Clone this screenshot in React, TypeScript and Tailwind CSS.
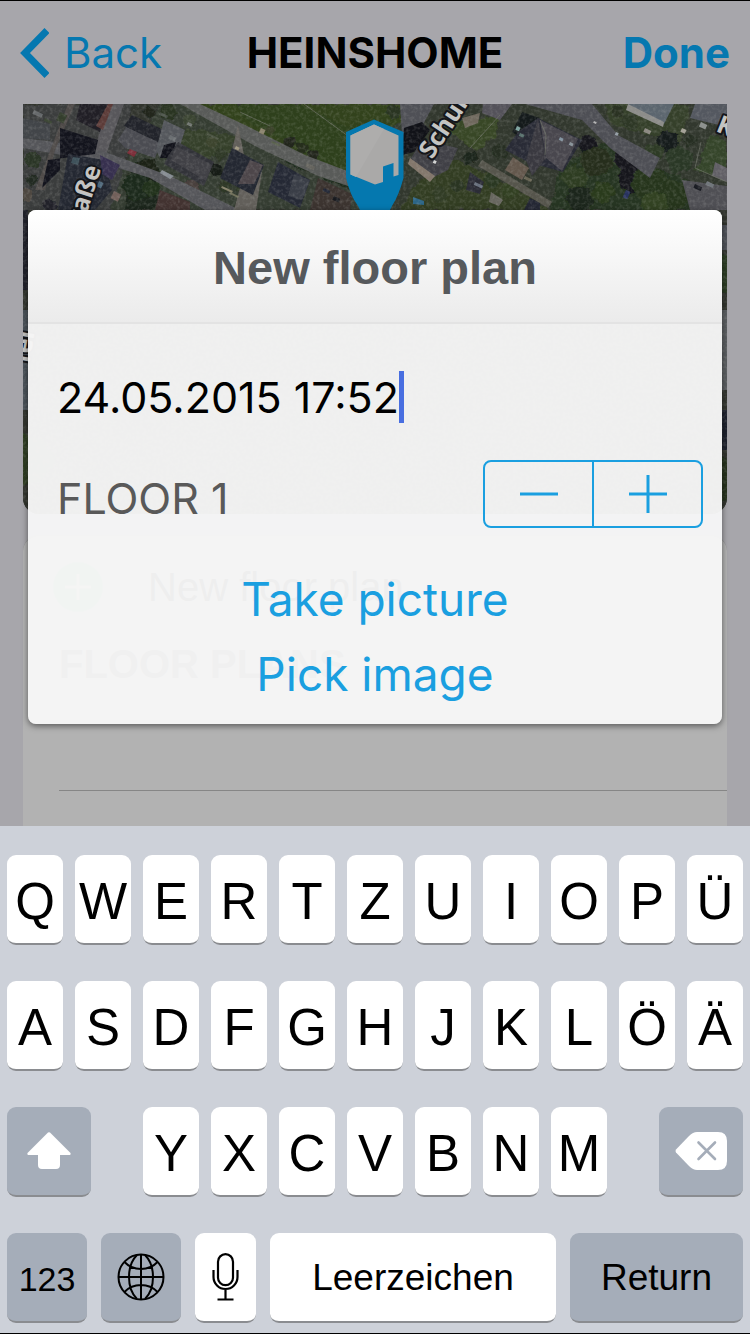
import { useState, type ReactNode } from "react";

type Shape = { d: string; fill: string };

const ground: Shape[] = [
  { d: "M23 104H130L120 210H23Z", fill: "#3b3c3e" },
  { d: "M160 104H330L420 104V210H110L130 150Z", fill: "#363c33" },
  { d: "M180 104L410 104L402 122L348 150L346 178L300 158L240 130Z", fill: "#33431f" },
  { d: "M235 104H300L365 135L345 178L315 158L243 118Z", fill: "#2f401f" },
  { d: "M290 150L345 178L350 190L280 160Z", fill: "#1f2a1a" },
  { d: "M185 128L235 135L232 152L205 160L180 148Z", fill: "#35402c" },
  { d: "M405 104H727V210H395Z", fill: "#30372d" },
  { d: "M430 125L500 115L495 135L478 152L455 135Z", fill: "#394627" },
  { d: "M455 160L500 180L550 210H400L420 180Z", fill: "#323d24" },
  { d: "M560 165L610 140L650 165L690 180L695 210H550Z", fill: "#283620" },
  { d: "M605 104L690 104L680 145L640 132L610 125Z", fill: "#353f2c" },
  { d: "M710 134L727 142V178L696 170Z", fill: "#34452b" },
  { d: "M133 165L158 170L160 200L150 210H125Z", fill: "#1d281b" },
];

const roads: Shape[] = [
  { d: "M108 104H124L104 160L92 158Z", fill: "#58575b" },
  { d: "M23 138L55 142L105 152L170 176L240 210H205L150 178L100 162L23 148Z", fill: "#55565a" },
  { d: "M180 104H200L245 125L305 155L350 172L354 188L318 176L255 146L205 118Z", fill: "#595b59" },
  { d: "M238 125L232 150L236 165L262 172L256 210H234L246 165Z", fill: "#625f5a" },
  { d: "M400 104H434L420 130L402 135Z", fill: "#4f5056" },
  { d: "M525 104H592L618 135L660 158L650 178L610 148L582 120Z", fill: "#4e4f55" },
  { d: "M682 180L727 186V210H690Z", fill: "#4f4f54" },
  { d: "M482 160L552 202L548 208L478 166Z", fill: "#56554c" },
  { d: "M23 118L50 124L50 140L23 138Z", fill: "#424549" },
  { d: "M68 104L75 104L55 150L45 190L35 190Z", fill: "#4f4b49" },
];

const roofs: Shape[] = [
  { d: "M80 104H108L100 132L76 120Z", fill: "#211f26" },
  { d: "M108 104H113L103 130L96 126Z", fill: "#5c3b38" },
  { d: "M60 128L98 140L95 154L48 160L42 188L60 170Z", fill: "#13141d" },
  { d: "M68 154L105 160L112 190L95 210H58Z", fill: "#242832" },
  { d: "M73 157L80 158L78 165L71 163Z", fill: "#3f525b" },
  { d: "M100 155L120 165L112 180L102 174Z", fill: "#37304f" },
  { d: "M118 140L132 118L165 133L155 158L125 148Z", fill: "#4b4c52" },
  { d: "M132 115L166 131L160 143L124 126Z", fill: "#22242b" },
  { d: "M164 120L185 130L180 146L160 158L156 150Z", fill: "#54575c" },
  { d: "M164 145L176 142L172 158L160 158Z", fill: "#12131b" },
  { d: "M168 156L178 142L214 162L204 186L164 164Z", fill: "#323339" },
  { d: "M176 146L212 165L206 181L171 160Z", fill: "#414146" },
  { d: "M232 148L264 165L253 195L220 178Z", fill: "#242832" },
  { d: "M250 160L263 165L254 184L238 184Z", fill: "#4d464a" },
  { d: "M278 162L310 180L300 208L268 192Z", fill: "#252935" },
  { d: "M294 174L310 180L302 200L288 196Z", fill: "#3a3e47" },
  { d: "M318 178L352 194L350 210H310Z", fill: "#3c3430" },
  { d: "M160 190L190 202V210H155Z", fill: "#433331" },
  { d: "M404 128L422 122L430 130L414 152L402 155Z", fill: "#111218" },
  { d: "M422 140L458 148L448 170L428 180L410 160Z", fill: "#404046" },
  { d: "M410 158L435 176L430 182L408 164Z", fill: "#83776c" },
  { d: "M483 104H512L500 120L482 113Z", fill: "#54525a" },
  { d: "M462 118L480 113L478 123L465 128Z", fill: "#6f685d" },
  { d: "M522 112L540 118L524 140L512 132Z", fill: "#141a1b" },
  { d: "M538 118L582 140L563 172L528 162L505 150L518 132Z", fill: "#292b36" },
  { d: "M540 120L578 139L562 171L546 158Z", fill: "#49474e" },
  { d: "M538 118L546 158L532 176L526 160Z", fill: "#3a3940" },
  { d: "M513 157L529 168L522 180L505 170Z", fill: "#64584d" },
  { d: "M628 104H674L664 124L630 110Z", fill: "#5c666f" },
  { d: "M628 104L664 122L663 127L626 110Z", fill: "#8d8d8a" },
  { d: "M695 104H727V127L690 118Z", fill: "#545860" },
  { d: "M470 172L484 182L480 194L466 190Z", fill: "#2b2c36" },
  { d: "M491 192L503 200L499 206L489 202Z", fill: "#68675f" },
  { d: "M413 197L424 201L424 205L413 204Z", fill: "#2c6586" },
  { d: "M530 198L540 203V210H524Z", fill: "#242734" },
  { d: "M162 170L174 176L170 179L160 173Z", fill: "#858b91" },
  { d: "M130 149L137 152L134 157L127 153Z", fill: "#7d2e39" },
  { d: "M715 162L727 168V182L712 176Z", fill: "#615f65" },
  { d: "M23 210H28V290H23Z", fill: "#20212a" },
  { d: "M23 310H28V410H23Z", fill: "#495158" },
  { d: "M722 225H727V250H722Z", fill: "#4e5158" },
  { d: "M722 310H727V390H722Z", fill: "#5a5d60" },
  { d: "M722 410H727V450H722Z", fill: "#1c202c" },
];

const trees = [
  [146, 170, 13, "#1a2419"], [138, 187, 16, "#1e2b1a"], [152, 188, 9, "#22331d"],
  [168, 112, 9, "#293420"], [190, 120, 7, "#3a4432"], [150, 112, 6, "#20281e"],
  [212, 142, 8, "#3c452f"], [220, 155, 6, "#2d3725"], [290, 142, 7, "#20281d"],
  [302, 148, 7, "#252e1e"], [314, 155, 6, "#20271d"], [216, 170, 8, "#171b16"],
  [225, 186, 8, "#2e3728"], [245, 190, 8, "#2b3522"], [270, 130, 5, "#3a4229"],
  [394, 112, 8, "#293522"], [500, 152, 8, "#262f20"], [470, 158, 8, "#1d251b"],
  [492, 180, 9, "#2c3922"], [510, 190, 10, "#313f22"], [440, 195, 9, "#303c25"],
  [457, 186, 7, "#2b3623"], [588, 145, 10, "#17191d"], [596, 162, 17, "#252f1c"],
  [575, 178, 14, "#2e3d22"], [580, 200, 15, "#1e281b"], [604, 192, 12, "#2b3a1f"],
  [628, 160, 15, "#14171d"], [634, 180, 17, "#15191c"], [650, 185, 20, "#25341e"],
  [672, 196, 18, "#26361d"], [655, 205, 15, "#304322"], [668, 142, 12, "#191e1d"],
  [680, 160, 15, "#2c3828"], [655, 152, 10, "#2e3b26"], [630, 122, 9, "#2d3726"],
  [618, 112, 6, "#293023"], [690, 140, 7, "#252d20"], [32, 180, 6, "#242c21"],
  [33, 160, 9, "#2b3626"], [50, 206, 8, "#20232a"], [192, 187, 8, "#4a3f3e"],
  [26, 195, 7, "#4d4741"], [725, 275, 22, "#2a3a22"], [725, 480, 25, "#26321f"],
  [25, 460, 30, "#2d3c22"],
] as const;

const specks = [
  [34, 110, 10, 4, "#66696b"], [45, 118, 8, 3, "#3e4837"], [60, 112, 8, 9, "#343e2d"],
  [170, 135, 7, 4, "#6c7073"], [188, 122, 5, 3, "#737873"], [208, 133, 12, 2, "#4d5544"],
  [160, 112, 9, 3, "#485046"], [114, 191, 8, 8, "#72605a"], [99, 181, 5, 6, "#4b667a"],
  [236, 146, 4, 3, "#a29a82"], [261, 128, 5, 5, "#8a826b"], [272, 141, 9, 2, "#58604b"],
  [222, 186, 12, 2, "#858169"], [230, 192, 10, 2, "#70705a"], [307, 163, 9, 4, "#65645e"],
  [324, 188, 7, 3, "#202635"], [334, 196, 7, 4, "#17191e"], [432, 152, 5, 3, "#85a0ab"],
  [434, 160, 3, 3, "#d4d5d4"], [560, 137, 4, 3, "#8293a0"], [570, 142, 4, 3, "#8a949b"],
  [517, 126, 4, 4, "#80a5a1"], [520, 133, 5, 3, "#59726f"], [594, 121, 3, 2, "#b5b5b5"],
  [645, 128, 7, 4, "#8d8a83"], [682, 128, 5, 4, "#a29f94"], [701, 122, 7, 5, "#8d918e"],
  [695, 184, 8, 4, "#171920"], [707, 181, 8, 4, "#72777c"], [475, 182, 9, 3, "#68707d"],
  [525, 176, 8, 3, "#676453"], [626, 190, 5, 8, "#293360"], [616, 132, 3, 3, "#97a0a8"],
] as const;

function AerialMap() {
  return (
    <svg
      className="block h-[410px] w-full rounded-b-2xl"
      viewBox="23 104 704 410"
      preserveAspectRatio="xMidYMin slice"
      role="img"
      aria-label="Map"
    >
      <defs>
        <filter id="rough" x="0" y="0" width="100%" height="100%">
          <feTurbulence type="fractalNoise" baseFrequency="0.12" numOctaves="3" seed="4" result="n" />
          <feDisplacementMap in="SourceGraphic" in2="n" scale="7" xChannelSelector="R" yChannelSelector="G" />
        </filter>
        <filter id="grain" x="0" y="0" width="100%" height="100%">
          <feTurbulence type="fractalNoise" baseFrequency="0.3" numOctaves="2" seed="8" />
          <feColorMatrix values="0 0 0 0 0.6  0 0 0 0 0.6  0 0 0 0 0.58  1.2 0 0 0 -0.5" />
        </filter>
      </defs>
      <rect x="23" y="104" width="704" height="410" fill="#30342f" />
      <g filter="url(#rough)">
        <rect x="13" y="94" width="724" height="430" fill="#30342f" />
        {ground.map((s) => <path key={s.d} d={s.d} fill={s.fill} />)}
        {trees.map(([x, y, r, fill]) => (
          <path
            key={`${x}-${y}`}
            d={`M${x - r} ${y}l${r * 0.3} ${-r * 0.7}l${r * 0.6} ${-r * 0.2}l${r * 0.7} ${r * 0.2}l${r * 0.4} ${r * 0.8}l${-r * 0.5} ${r * 0.6}l${-r * 0.8} ${r * 0.2}z`}
            fill={fill}
          />
        ))}
      </g>
      {roads.map((s) => <path key={s.d} d={s.d} fill={s.fill} />)}
      {roofs.map((s) => <path key={s.d} d={s.d} fill={s.fill} />)}
      {specks.map(([x, y, w, h, fill]) => (
        <rect key={`${x}-${y}`} x={x} y={y} width={w} height={h} fill={fill} transform={`rotate(25 ${x} ${y})`} />
      ))}
      <path d="M304 104L348 136M240 112L270 126M545 155L546 135L540 120M470 148L500 115M701 142L695 168L727 182" stroke="#6c7065" strokeWidth="1" fill="none" opacity=".7" />
      <rect x="23" y="104" width="704" height="410" filter="url(#grain)" opacity=".35" />
      <g
        fill="#c4c4c2"
        stroke="#15161a"
        strokeWidth="4"
        strokeLinejoin="round"
        paintOrder="stroke"
        fontFamily="'Noto Sans', sans-serif"
        fontWeight="700"
        fontSize="25"
      >
        <text transform="translate(432 160) rotate(-57)">Schul</text>
        <text transform="translate(80 234) rotate(-72)">traße</text>
        <text transform="translate(715 131) rotate(22)">K</text>
        <text transform="translate(29 364) rotate(-80)">fel</text>
      </g>
      <path d="M374 119.500L403.500 132V178Q399 195 392 206L375 240L358 206Q350 195 346 178V132Z" fill="#0578af" />
      <path d="M374 124.500L398.500 135.500V175L393.500 176.500V163L383 166.500V182L375 184.500L350.500 174.500V135.500Z" fill="#aaa9a8" />
      <path d="M374 124.500L384 129L356 177L350.500 174.500V135.500Z" fill="#aeadac" />
    </svg>
  );
}

function Key({ label, dark, className = "", children }: { label?: string; dark?: boolean; className?: string; children?: ReactNode }) {
  return (
    <button
      type="button"
      aria-label={label}
      className={`flex h-[90px] items-center justify-center rounded-[9px] border-b-2 border-[#8a8c90] ${dark ? "bg-[#a5adb9]" : "bg-white"} ${className}`}
    >
      {children}
    </button>
  );
}

const letterKey = "pt-1 text-[51px] leading-none";

function Keyboard() {
  return (
    <section aria-label="Keyboard" className="flex flex-1 flex-col gap-9 bg-[#cdd1d9] px-[7px] pt-[29px] pb-[10px] font-['Liberation_Sans',sans-serif] text-black">
      {["QWERTZUIOPÜ", "ASDFGHJKLÖÄ"].map((row) => (
        <div key={row} className="grid grid-cols-11 gap-3">
          {row.split("").map((c) => <Key key={c} className={letterKey}>{c}</Key>)}
        </div>
      ))}
      <div className="grid grid-cols-11 gap-3">
        <div className="col-span-2 flex">
          <Key label="Shift" dark className="w-[84px]">
            <svg width="46" height="40" viewBox="0 0 46 40" fill="#fff" aria-hidden="true">
              <path d="M22 1.500Q23 .8 24 1.500L44.500 22Q45.200 24 43 24H34V34Q34 38 30 38H16Q12 38 12 34V24H3Q.8 24 1.500 22Z" />
            </svg>
          </Key>
        </div>
        {"YXCVBNM".split("").map((c) => <Key key={c} className={letterKey}>{c}</Key>)}
        <div className="col-span-2 flex justify-end">
          <Key label="Delete" dark className="w-[84px]">
            <svg width="52" height="38" viewBox="0 0 52 38" aria-hidden="true">
              <path d="M1 17.500Q0 19 1 20.500L14 34Q18 38 22 38H43Q52 38 52 29V9Q52 0 43 0H22Q18 0 14 4Z" fill="#fff" />
              <path d="M23.500 10.500L40 27M40 10.500L23.500 27" stroke="#a5adb9" strokeWidth="2.600" strokeLinecap="round" />
            </svg>
          </Key>
        </div>
      </div>
      <div className="flex gap-[14px] text-[37px] leading-none">
        <Key dark className="w-20 pt-1 text-[34px]">123</Key>
        <Key label="Next keyboard" dark className="w-20">
          <svg width="48" height="48" viewBox="0 0 48 48" fill="none" stroke="#000" strokeWidth="2" aria-hidden="true">
            <circle cx="24" cy="24" r="22.500" />
            <path d="M24 1.500V46.500M1.500 24H46.500M20 2Q12 10 12 24T20 46M28 2Q36 10 36 24T28 46M7.500 9Q14 16 24 16T40.500 9M7.500 39Q14 32 24 32T40.500 39" />
          </svg>
        </Key>
        <Key label="Dictate" className="w-[61px]">
          <svg width="28" height="48" viewBox="0 0 28 48" fill="none" stroke="#000" strokeWidth="2.200" aria-hidden="true">
            <rect x="6" y="1.200" width="15" height="31" rx="7.500" />
            <path d="M1.500 17V24A12 12 0 0 0 25.500 24V17M13.500 36V46M5.500 46.500H21.500" />
          </svg>
        </Key>
        <Key className="flex-1">Leerzeichen</Key>
        <Key dark className="w-[173px]">Return</Key>
      </div>
    </section>
  );
}

function NewFloorPlanDialog() {
  const [name, setName] = useState("24.05.2015 17:52");
  const [floor, setFloor] = useState(1);
  return (
    <div
      role="dialog"
      aria-label="New floor plan"
      className="absolute inset-x-7 top-[209px] overflow-hidden rounded-lg bg-[#f6f6f6]/97 pb-[13px] shadow-[0_2px_6px_rgba(0,0,0,0.5)]"
    >
      <h2 className="flex h-[114px] items-center justify-center border-b-2 border-[#e3e3e3] bg-linear-to-b from-white to-[#ebebeb] pt-1 font-['Liberation_Sans',sans-serif] text-[47px] font-bold text-[#56595c]">
        New floor plan
      </h2>
      <div className="mt-[47px] flex h-[52px] items-center px-[29px]">
        <input
          aria-label="Name"
          value={name}
          onChange={(e) => setName(e.target.value)}
          className="field-sizing-content bg-transparent text-[43px] leading-none text-black caret-transparent outline-none"
        />
        <span className="h-full w-[5px] bg-[#486ee0]" />
      </div>
      <div className="mt-[37px] flex h-[68px] items-center justify-between pr-[19px] pl-[29px]">
        <span className="pt-2 text-[43px] leading-none text-[#595959]">FLOOR {floor}</span>
        <div className="flex h-full w-[220px] divide-x-2 divide-[#1a9fe0] rounded-lg border-2 border-[#1a9fe0]">
          <button type="button" aria-label="Lower floor" onClick={() => setFloor(floor - 1)} className="flex flex-1 items-center justify-center">
            <svg width="38" height="38" viewBox="0 0 38 38" aria-hidden="true"><path d="M0 19H38" stroke="#1a9fe0" strokeWidth="3" /></svg>
          </button>
          <button type="button" aria-label="Higher floor" onClick={() => setFloor(floor + 1)} className="flex flex-1 items-center justify-center">
            <svg width="38" height="38" viewBox="0 0 38 38" aria-hidden="true"><path d="M0 19H38M19 0V38" stroke="#1a9fe0" strokeWidth="3" /></svg>
          </button>
        </div>
      </div>
      <div className="mt-[33px] flex flex-col items-center text-[46px] text-[#1a9fe0]">
        <button type="button" className="h-[75px] leading-none">Take picture</button>
        <button type="button" className="h-[75px] leading-none">Pick image</button>
      </div>
    </div>
  );
}

export default function App() {
  return (
    <div className="flex min-h-screen flex-col border-y border-black bg-[#a7a6ab] font-['Inter',sans-serif]">
      <main className="relative">
        <header className="grid h-[103px] grid-cols-[1fr_auto_1fr] items-center px-5 text-[42px] text-[#0578b0]">
          <button type="button" className="flex items-center gap-[15px] justify-self-start">
            <svg width="29" height="50" viewBox="0 0 29 50" fill="none" stroke="#0578b0" strokeWidth="7" aria-hidden="true">
              <path d="M27 2.500L5 25L27 47.500" />
            </svg>
            Back
          </button>
          <h1 className="font-bold text-black">HEINSHOME</h1>
          <button type="button" className="justify-self-end font-bold">Done</button>
        </header>
        <div className="px-[23px]">
          <AerialMap />
          <section className="mt-[21px] rounded-t-2xl border-t border-[#909090] bg-[#b2b2b2] font-['Liberation_Sans',sans-serif] text-[40px] text-black">
            <div className="flex h-[101px] items-center pl-[30px]">
              <svg width="50" height="50" viewBox="0 0 50 50" aria-hidden="true">
                <circle cx="25" cy="25" r="25" fill="#6fae8e" />
                <path d="M25 12V38M12 25H38" stroke="#cdb" strokeWidth="3" />
              </svg>
              <span className="pl-[45px]">New floor plan</span>
            </div>
            <h2 className="ml-9 h-[154px] border-b border-[#868686] leading-[54px] font-bold text-[#444]">FLOOR PLANS</h2>
            <div className="h-[35px]" />
          </section>
        </div>
        <NewFloorPlanDialog />
      </main>
      <Keyboard />
    </div>
  );
}
